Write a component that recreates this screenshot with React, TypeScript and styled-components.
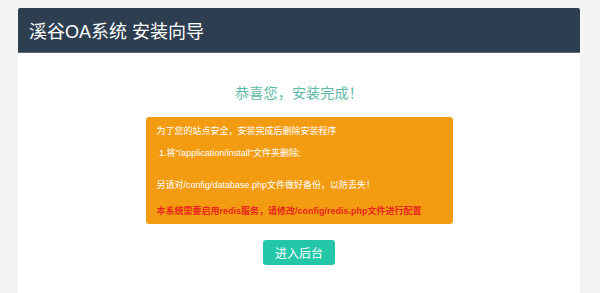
import styled, { createGlobalStyle } from "styled-components"

const GlobalStyle = createGlobalStyle`
  body {
    margin: 0;
    background-color: #f4f4f4;
    font-family: "Liberation Sans", "Noto Sans CJK SC", sans-serif;
  }
`

const Page = styled.div`
  padding: 8px 0 0 18px;
  min-height: 293px;
  box-sizing: border-box;
`

const Panel = styled.div`
  width: 562px;
  min-height: 285px;
  background-color: #ffffff;
  display: flex;
  flex-direction: column;
`

const Header = styled.div`
  height: 45px;
  background-color: #2d3e50;
  border-radius: 2px 2px 0 0;
  border-bottom: 1px solid #5a6878;
  box-sizing: border-box;
  padding-left: 11px;
  display: flex;
  align-items: center;
  color: #ffffff;
  font-size: 18px;
`

const Body = styled.div`
  display: flex;
  flex-direction: column;
  align-items: center;
  padding-top: 30px;
`

const Title = styled.div`
  color: #5cb8a8;
  font-size: 14px;
  line-height: 20px;
  letter-spacing: 0.2px;
`

const Notice = styled.div`
  margin-top: 14px;
  width: 307px;
  height: 107px;
  box-sizing: border-box;
  background-color: #f39c12;
  border-radius: 3px;
  padding: 0 11px;
`

const Line = styled.p<{ $gap: number; $alert?: boolean }>`
  margin: ${(p) => p.$gap}px 0 0;
  font-size: 9px;
  line-height: 14px;
  color: ${(p) => (p.$alert ? "#e8261c" : "#ffffff")};
  font-weight: ${(p) => (p.$alert ? "bold" : "normal")};
  white-space: pre;
`

const Button = styled.button`
  margin-top: 16px;
  width: 72px;
  height: 25px;
  border: none;
  border-radius: 3px;
  background-color: #24c6a8;
  color: #ffffff;
  font-family: inherit;
  font-size: 12px;
  cursor: pointer;
`

const App = () => {
  return (
    <Page>
      <GlobalStyle />
      <Panel>
        <Header>溪谷OA系统 安装向导</Header>
        <Body>
          <Title>恭喜您，安装完成！</Title>
          <Notice>
            <Line $gap={7}>为了您的站点安全，安装完成后删除安装程序</Line>
            <Line $gap={8}> 1.将"/application/install"文件夹删除;</Line>
            <Line $gap={18}>另请对/config/database.php文件做好备份，以防丢失！</Line>
            <Line $gap={12} $alert>
              本系统需要启用redis服务，请修改/config/redis.php文件进行配置
            </Line>
          </Notice>
          <Button>进入后台</Button>
        </Body>
      </Panel>
    </Page>
  )
}

export default App
